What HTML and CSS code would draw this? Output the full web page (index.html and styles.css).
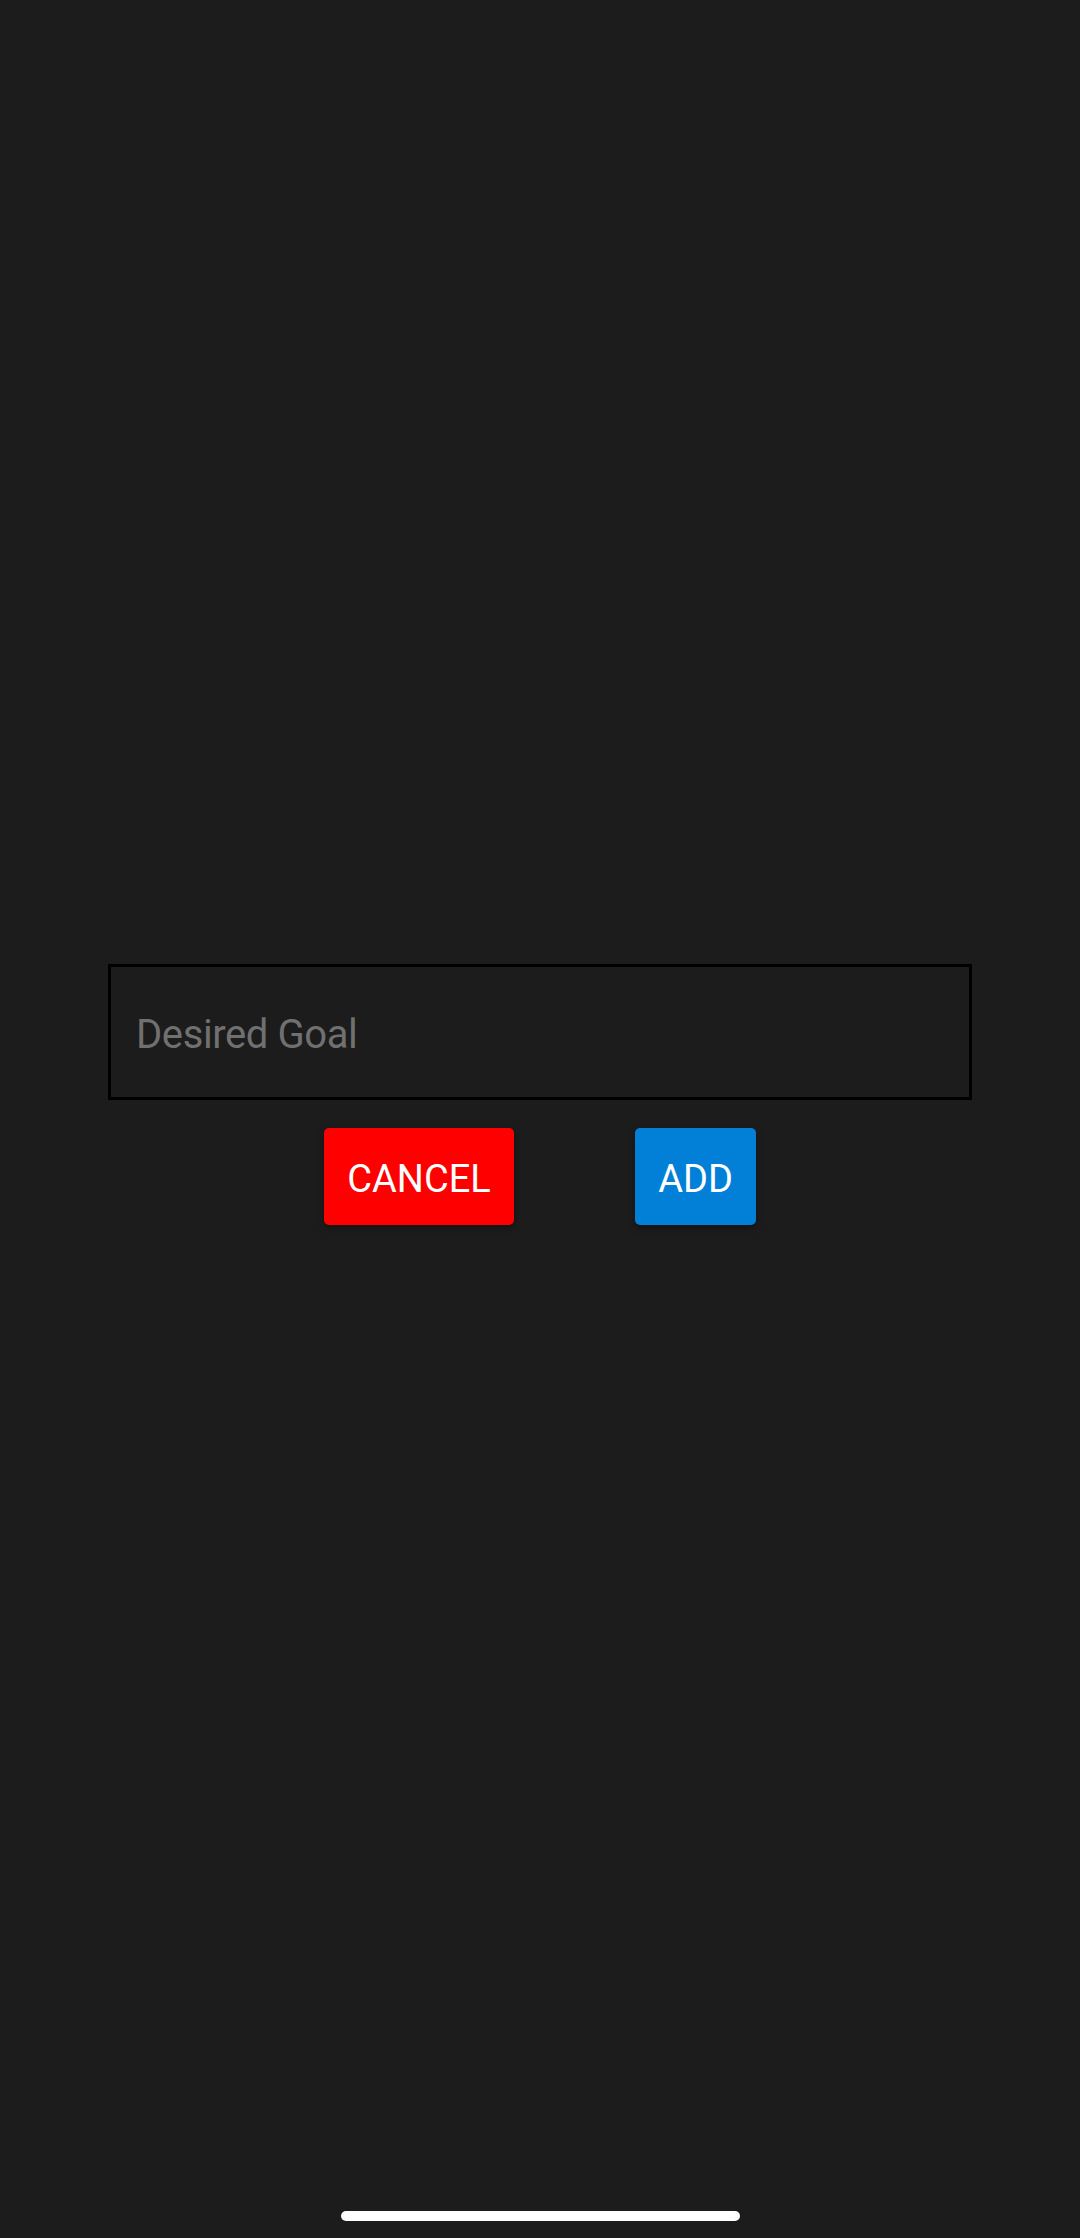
FILE: index.html
```html
<!DOCTYPE html>
<html>
<head>
<meta charset="utf-8">
<link rel="stylesheet" href="styles.css">
</head>
<body>
<div class="screen">
  <div class="form">
    <div class="input"><span class="placeholder">Desired Goal</span></div>
    <div class="actions">
      <div class="btn btn-cancel">CANCEL</div>
      <div class="btn btn-add">ADD</div>
    </div>
  </div>
  <div class="home-indicator"></div>
</div>
</body>
</html>
```

FILE: styles.css
```css
html, body {
  margin: 0;
  padding: 0;
  background: #1c1c1c;
}
.screen {
  width: 1080px;
  height: 2238px;
  display: flex;
  flex-direction: column;
  align-items: center;
  font-family: Roboto, "Liberation Sans", sans-serif;
  box-sizing: border-box;
  padding-top: 964px;
}
.form {
  display: flex;
  flex-direction: column;
  align-items: center;
  gap: 28px;
}
.input {
  width: 864px;
  height: 136px;
  box-sizing: border-box;
  border: 3px solid #000;
  display: flex;
  align-items: center;
  padding-left: 25px;
  padding-top: 5px;
}
.placeholder {
  font-size: 40px;
  letter-spacing: -0.4px;
  color: #707070;
}
.actions {
  display: flex;
  gap: 121px;
}
.btn {
  height: 97px;
  box-sizing: border-box;
  padding-top: 5px;
  display: flex;
  align-items: center;
  justify-content: center;
  color: #fff;
  font-size: 38px;
  border-radius: 5px;
  box-shadow: 0 3px 6px rgba(0,0,0,0.35);
}
.btn-cancel {
  width: 190px;
  background: #fe0000;
}
.btn-add {
  width: 121px;
  background: #0280d8;
}
.home-indicator {
  margin-top: auto;
  margin-bottom: 17px;
  width: 399px;
  height: 10px;
  border-radius: 5px;
  background: #fff;
}
```
